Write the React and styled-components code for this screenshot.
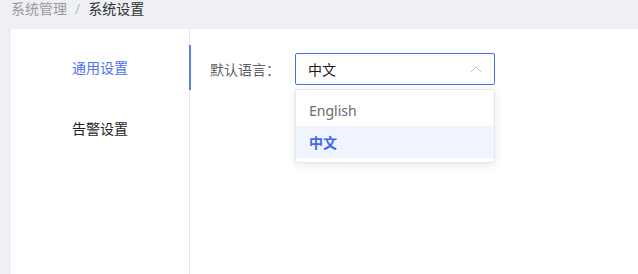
import React from "react";
import styled, { createGlobalStyle } from "styled-components";

const Global = createGlobalStyle`
  html, body { margin: 0; padding: 0; background: #eef0f5; }
  body { font-family: "Noto Sans", "Noto Sans CJK SC", sans-serif; font-size: 14px; }
  #root { min-height: 274px; }
`;

const Page = styled.div`
  display: flex;
  flex-direction: column;
  height: 274px;
  padding-left: 11px;
  box-sizing: border-box;
  overflow: hidden;
`;

const Breadcrumb = styled.div`
  display: flex;
  align-items: center;
  height: 20px;
  margin-top: -1px;
  font-size: 14px;
  line-height: 20px;
  color: #999;
`;

const Crumb = styled.span`
  color: ${p => (p.$current ? "#303133" : "#9a9a9a")};
`;

const Sep = styled.span`
  margin: 0 8px;
  color: #b8bcc4;
`;

const Card = styled.div`
  flex: 1;
  margin-top: 10px;
  background: #fff;
  display: flex;
`;

const Sidebar = styled.div`
  width: 178px;
  border-right: 1px solid #e6e6e6;
  padding-top: 16px;
  display: flex;
  flex-direction: column;
  gap: 16px;
`;

const MenuItem = styled.div`
  position: relative;
  height: 45px;
  display: flex;
  align-items: center;
  justify-content: center;
  padding-bottom: 1px;
  box-sizing: border-box;
  font-size: 14px;
  color: ${p => (p.$active ? "#4c72f0" : "#1f1f1f")};
  &::after {
    content: "";
    display: ${p => (p.$active ? "block" : "none")};
    position: absolute;
    right: -2px;
    top: 0;
    bottom: 0;
    width: 2px;
    background: #5b7fe6;
  }
`;

const Content = styled.div`
  flex: 1;
  padding: 24px 0 0 20px;
`;

const FormRow = styled.div`
  display: flex;
  align-items: center;
`;

const Label = styled.label`
  width: 85px;
  font-size: 14px;
  color: #5f6166;
`;

const SelectWrap = styled.div`
  position: relative;
  width: 200px;
`;

const SelectBox = styled.div`
  height: 32px;
  box-sizing: border-box;
  border: 1px solid #4470f5;
  border-radius: 2px;
  display: flex;
  align-items: center;
  justify-content: space-between;
  padding: 0 12px 0 12px;
  font-size: 14px;
  color: #1a1a1a;
`;

const Dropdown = styled.ul`
  position: absolute;
  top: 36px;
  left: 0;
  right: 0;
  margin: 0;
  list-style: none;
  padding: 4px 0;
  background: #fff;
  border: 1px solid #e4e7ed;
  box-shadow: 0 2px 10px rgba(0, 0, 0, 0.1);
  border-radius: 2px;
`;

const Option = styled.li`
  height: 32px;
  display: flex;
  align-items: center;
  padding-left: 13px;
  font-size: 14px;
  color: ${p => (p.$selected ? "#3f66e8" : "#6b6d72")};
  font-weight: ${p => (p.$selected ? 700 : 400)};
  background: ${p => (p.$selected ? "#f0f4fe" : "transparent")};
`;

const Arrow = () => (
  <svg width="12" height="7" viewBox="0 0 12 7" fill="none">
    <path d="M1 6L6 1L11 6" stroke="#c0c4cc" strokeWidth="1" />
  </svg>
);

export default function App() {
  return (
    <>
      <Global />
      <Page>
        <Breadcrumb>
          <Crumb>系统管理</Crumb>
          <Sep>/</Sep>
          <Crumb $current>系统设置</Crumb>
        </Breadcrumb>
        <Card>
          <Sidebar>
            <MenuItem $active>通用设置</MenuItem>
            <MenuItem>告警设置</MenuItem>
          </Sidebar>
          <Content>
            <FormRow>
              <Label>默认语言：</Label>
              <SelectWrap>
                <SelectBox>
                  <span>中文</span>
                  <Arrow />
                </SelectBox>
                <Dropdown>
                  <Option>English</Option>
                  <Option $selected>中文</Option>
                </Dropdown>
              </SelectWrap>
            </FormRow>
          </Content>
        </Card>
      </Page>
    </>
  );
}
